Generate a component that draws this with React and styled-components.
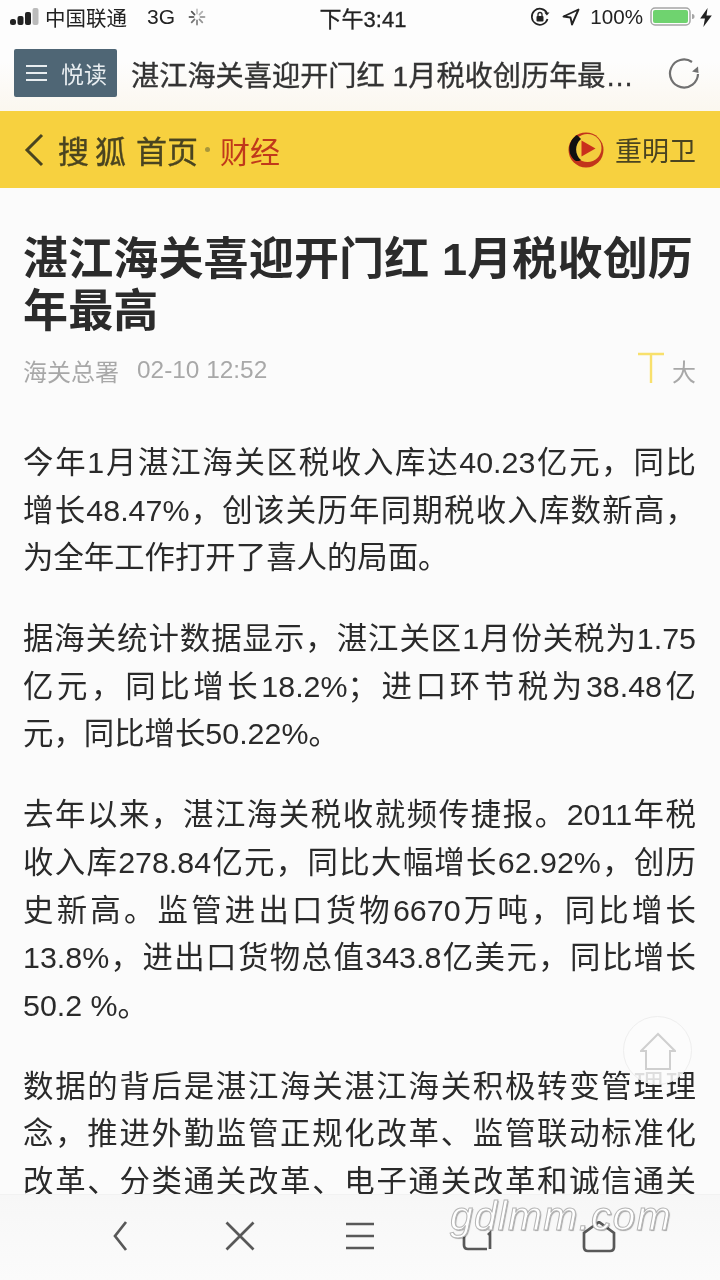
import React from 'react';
import styled, { createGlobalStyle } from 'styled-components';

const sans = '"Liberation Sans", "Noto Sans CJK SC", sans-serif';

const Global = createGlobalStyle`
  html, body { margin: 0; padding: 0; background: #fbfbfb; }
  body { font-family: ${sans}; }
  * { box-sizing: border-box; }
`;

const Phone = styled.div`
  position: relative;
  width: 720px;
  height: 1280px;
  overflow: hidden;
  background: #fbfbfb;
  filter: blur(0.4px);
`;

const TopChrome = styled.div`
  height: 111px;
  background: linear-gradient(#fdfdfd 0%, #fdfdfd 55%, #fbf7ef 100%);
  display: flex;
  flex-direction: column;
`;

const StatusBar = styled.div`
  height: 36px;
  padding: 0 8px 2px 10px;
  display: flex;
  align-items: center;
  color: #222;
  font-size: 20.6px;
`;

const StatusSide = styled.div`
  flex: 1;
  display: flex;
  align-items: center;
  justify-content: ${p => (p.$end ? 'flex-end' : 'flex-start')};
`;

const Clock = styled.div`
  width: 140px;
  text-align: center;
  font-size: 22px;
  margin-left: 4px;
  -webkit-text-stroke: 0.3px #222;
`;

const Carrier = styled.span`
  margin-left: 6px;
  font-size: 20.5px;
`;

const Network = styled.span`
  margin-left: 20px;
  margin-right: 13px;
  font-size: 21px;
`;

const StatusGap = styled.span`
  width: ${p => p.$w}px;
`;

const Toolbar = styled.div`
  flex: 1;
  padding: 13px 20px 14px 14px;
  display: flex;
  align-items: center;
`;

const ReaderButton = styled.div`
  width: 103px;
  height: 48px;
  flex: none;
  border-radius: 2px;
  background: #4f6675;
  color: #e8edf0;
  display: flex;
  align-items: center;
  padding-left: 12px;
  gap: 14px;
  font-size: 23px;
`;

const MenuLines = styled.div`
  width: 21px;
  height: 16px;
  border-top: 2px solid #e8edf0;
  border-bottom: 2px solid #e8edf0;
  position: relative;
  &::after {
    content: '';
    position: absolute;
    left: 0;
    right: 0;
    top: 5px;
    height: 2px;
    background: #e8edf0;
  }
`;

const PageTitle = styled.div`
  flex: 1;
  margin-left: 14px;
  font-size: 28.2px;
  color: #333;
  white-space: nowrap;
  -webkit-text-stroke: 0.35px #333;
`;

const BrandBar = styled.div`
  height: 77px;
  background: #f7d13f;
  padding: 0 24px;
  display: flex;
  align-items: center;
`;

const Brand = styled.div`
  font-size: 31px;
  color: #4a4420;
  margin-left: 14px;
  display: flex;
  gap: 4px;
  -webkit-text-stroke: 0.4px #4a4420;
`;

const BrandWord = styled.span`
  letter-spacing: ${p => p.$spread}px;
`;

const Dot = styled.span`
  width: 5px;
  height: 5px;
  border-radius: 50%;
  background: #a8963a;
  margin: 0 10px 0 7px;
  flex: none;
`;

const Channel = styled.div`
  font-size: 30px;
  color: #c0391b;
`;

const Partner = styled.div`
  margin-left: auto;
  display: flex;
  align-items: center;
  gap: 11px;
  font-size: 27px;
  color: #4a4420;
`;

const Article = styled.main`
  padding: 46px 24px 0 23px;
`;

const Headline = styled.h1`
  margin: 0;
  font-size: 45px;
  line-height: 52px;
  font-weight: 700;
  color: #2b2b2b;
  letter-spacing: 0.15px;
`;

const Meta = styled.div`
  margin-top: 10px;
  height: 44px;
  display: flex;
  align-items: center;
  color: #a8a8a8;
  font-size: 24px;
`;

const MetaDate = styled.span`
  margin-left: 18px;
  font-size: 24.4px;
`;

const FontSize = styled.div`
  margin-left: auto;
  display: flex;
  align-items: center;
  gap: 8px;
`;

const LargeT = styled.svg`
  fill: none;
  stroke: #f8e06c;
  stroke-width: 2.4;
  margin-bottom: 6px;
`;

const Body = styled.div`
  margin-top: 47px;
`;

const Paragraph = styled.p`
  margin: 0 0 33.4px;
  font-size: 30.4px;
  line-height: 47.6px;
  color: #2a2a2a;
`;

const Line = styled.span`
  display: block;
  white-space: nowrap;
  text-align: justify;
  text-align-last: ${p => (p.$last ? 'left' : 'justify')};
`;

const HomeBubble = styled.div`
  position: absolute;
  left: 623px;
  top: 1016px;
  width: 69px;
  height: 69px;
  border-radius: 50%;
  background: rgba(251, 251, 251, 0.86);
  border: 1px solid #eee;
  display: flex;
  align-items: center;
  justify-content: center;
`;

const BottomBar = styled.div`
  position: absolute;
  left: 0;
  right: 0;
  bottom: 0;
  height: 86px;
  background: linear-gradient(#f7f7f7, #fbfbfb);
  border-top: 1px solid #f2f2f2;
  padding: 26px 60px 0;
  display: grid;
  grid-template-columns: repeat(5, 120px);
  justify-items: center;
  align-items: start;
`;

const NavIcon = styled.svg`
  fill: none;
  stroke: #585858;
  stroke-width: 2.7;
  display: block;
  margin-right: ${p => p.$nudge || 0}px;
`;

const Watermark = styled.div`
  position: absolute;
  left: 450px;
  top: 1193px;
  font-family: "Liberation Sans", sans-serif;
  font-style: italic;
  font-size: 41px;
  letter-spacing: 1.1px;
  color: #fff;
  -webkit-text-stroke: 1px #b5b5b5;
  text-shadow: 1px 1px 1px rgba(0, 0, 0, 0.35);
`;

const Signal = () => (
  <svg width="29" height="18" viewBox="0 0 29 18">
    <rect x="0" y="11" width="6" height="6" rx="2.5" fill="#222" />
    <rect x="7.500" y="8" width="6" height="9" rx="2" fill="#222" />
    <rect x="15" y="4" width="6" height="13" rx="2" fill="#222" />
    <rect x="22.500" y="0" width="6" height="17" rx="2" fill="#bbb" />
  </svg>
);

const Spinner = () => (
  <svg width="18" height="18" viewBox="0 0 18 18" stroke="#555" strokeWidth="1.8" strokeLinecap="round">
    {Array.from({ length: 8 }, (_, i) => (
      <line key={i} x1="9" y1="1.5" x2="9" y2="5.5" opacity={0.35 + i * 0.09} transform={`rotate(${i * 45} 9 9)`} />
    ))}
  </svg>
);

const RotationLock = () => (
  <svg width="20" height="20" viewBox="0 0 20 20" fill="none">
    <path d="M17.500 12a8 8 0 1 1-.6-6" stroke="#222" strokeWidth="1.7" />
    <path d="M19.500 5.500l-2.600 3-2.600-3z" fill="#222" />
    <rect x="6.500" y="9" width="7" height="5.500" rx="1" fill="#222" />
    <path d="M8 9V7.500a2 2 0 0 1 4 0V9" stroke="#222" strokeWidth="1.3" />
  </svg>
);

const Location = () => (
  <svg width="18" height="18" viewBox="0 0 18 18" fill="none">
    <path d="M16.500 1.500L1.500 8.500l7 1 1.500 7z" stroke="#222" strokeWidth="1.9" strokeLinejoin="round" />
  </svg>
);

const Battery = () => (
  <svg width="45" height="20" viewBox="0 0 45 20">
    <rect x="1" y="1" width="39" height="17" rx="4" fill="none" stroke="#a5a5a5" strokeWidth="1.500" />
    <rect x="3" y="3" width="35" height="13" rx="2" fill="#6fd36f" />
    <path d="M42 7c2 0 2.500 1.200 2.500 2.500S44 12 42 12z" fill="#a5a5a5" />
  </svg>
);

const Bolt = () => (
  <svg width="12" height="19" viewBox="0 0 11 18">
    <path d="M7 0L0 10h4.500L3 18l8-11H6z" fill="#222" />
  </svg>
);

const Reload = () => (
  <svg width="32" height="32" viewBox="0 0 32 32" fill="none" style={{ flex: 'none' }}>
    <path d="M30 17a14 14 0 1 1-6-12" stroke="#707070" strokeWidth="2.200" />
    <path d="M30 9.500l.5 6.500-6.500-1.500z" fill="#707070" />
  </svg>
);

const Chevron = () => (
  <svg width="20" height="34" viewBox="0 0 20 34" fill="none" style={{ flex: 'none' }}>
    <path d="M18 2L3 17l15 15" stroke="#4a4420" strokeWidth="3" />
  </svg>
);

const PartnerLogo = () => (
  <svg width="36" height="36" viewBox="0 0 36 36">
    <circle cx="18" cy="18" r="17.500" fill="#c2351b" />
    <circle cx="19.500" cy="16" r="14" fill="#f3cd3e" />
    <path d="M9 3C-1 9-1 24 8 29c2 0 4 0 5-1-6-5-7-15 0-21z" fill="#111" />
    <path d="M13.500 8.500l14 8-14 8z" fill="#c9301c" />
  </svg>
);

const House = () => (
  <svg width="36" height="38" viewBox="0 0 36 38" fill="none" stroke="#cfcfcf" strokeWidth="2">
    <path d="M1 19L18 2l17 17H30v18H6V19z" />
  </svg>
);

const paragraphs = [
  ['今年1月湛江海关区税收入库达40.23亿元，同比', '增长48.47%，创该关历年同期税收入库数新高，', '为全年工作打开了喜人的局面。'],
  ['据海关统计数据显示，湛江关区1月份关税为1.75', '亿元，同比增长18.2%；进口环节税为38.48亿', '元，同比增长50.22%。'],
  ['去年以来，湛江海关税收就频传捷报。2011年税', '收入库278.84亿元，同比大幅增长62.92%，创历', '史新高。监管进出口货物6670万吨，同比增长', '13.8%，进出口货物总值343.8亿美元，同比增长', '50.2 %。'],
  ['数据的背后是湛江海关湛江海关积极转变管理理', '念，推进外勤监管正规化改革、监管联动标准化', '改革、分类通关改革、电子通关改革和诚信通关', '改革'],
];

export default function App() {
  return (
    <Phone>
      <Global />
      <TopChrome>
        <StatusBar>
          <StatusSide>
            <Signal />
            <Carrier>中国联通</Carrier>
            <Network>3G</Network>
            <Spinner />
          </StatusSide>
          <Clock>下午3:41</Clock>
          <StatusSide $end>
            <RotationLock />
            <StatusGap $w={12} />
            <Location />
            <StatusGap $w={10} />
            <span>100%</span>
            <StatusGap $w={7} />
            <Battery />
            <StatusGap $w={5} />
            <Bolt />
          </StatusSide>
        </StatusBar>
        <Toolbar>
          <ReaderButton>
            <MenuLines />
            <span>悦读</span>
          </ReaderButton>
          <PageTitle>湛江海关喜迎开门红 1月税收创历年最…</PageTitle>
          <Reload />
        </Toolbar>
      </TopChrome>
      <BrandBar>
        <Chevron />
        <Brand>
          <BrandWord $spread={6}>搜狐</BrandWord>
          <BrandWord $spread={0}>首页</BrandWord>
        </Brand>
        <Dot />
        <Channel>财经</Channel>
        <Partner>
          <PartnerLogo />
          <span>重明卫</span>
        </Partner>
      </BrandBar>
      <Article>
        <Headline>湛江海关喜迎开门红 1月税收创历年最高</Headline>
        <Meta>
          <span>海关总署</span>
          <MetaDate>02-10 12:52</MetaDate>
          <FontSize>
            <LargeT width="26" height="31" viewBox="0 0 26 31">
              <path d="M0 2h26M13 2v29" />
            </LargeT>
            <span>大</span>
          </FontSize>
        </Meta>
        <Body>
          {paragraphs.map((lines, p) => (
            <Paragraph key={p}>
              {lines.map((line, i) => (
                <Line key={i} $last={i === lines.length - 1}>{line}</Line>
              ))}
            </Paragraph>
          ))}
        </Body>
      </Article>
      <HomeBubble>
        <House />
      </HomeBubble>
      <BottomBar>
        <NavIcon width="16" height="30" viewBox="0 0 16 30">
          <path d="M14 1L3 15l11 14" />
        </NavIcon>
        <NavIcon width="30" height="30" viewBox="0 0 30 30">
          <path d="M1.500 1.500l27 27M28.500 1.500l-27 27" />
        </NavIcon>
        <NavIcon width="30" height="30" viewBox="0 0 30 30">
          <path d="M1 3h28M1 15h28M1 27h28" />
        </NavIcon>
        <NavIcon width="34" height="30" viewBox="0 0 34 30" $nudge={2}>
          <path d="M2 14v10q0 4 4 4h19M28 28V12l-2 2" />
        </NavIcon>
        <NavIcon width="34" height="32" viewBox="0 0 34 32" $nudge={3}>
          <path d="M17 1L2 12v14q0 4 4 4h22q4 0 4-4V12z" />
        </NavIcon>
      </BottomBar>
      <Watermark>gdlmm.com</Watermark>
    </Phone>
  );
}
